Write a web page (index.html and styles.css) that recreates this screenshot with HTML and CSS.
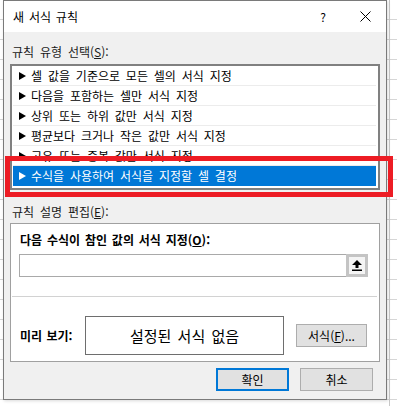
FILE: index.html
```html
<!DOCTYPE html>
<html lang="ko">
<head>
<meta charset="utf-8">
<link rel="stylesheet" href="styles.css">
</head>
<body>
<div class="dialog">
  <div class="titlebar">
    <span class="title">새 서식 규칙</span>
    <span class="help">?</span>
    <span class="close"><svg width="11" height="11" viewBox="0 0 11 11"><path d="M0.5 0.5 L10.5 10.5 M10.5 0.5 L0.5 10.5" stroke="#000" stroke-width="1" fill="none"/></svg></span>
  </div>
  <div class="body">
    <div class="label">규칙 유형 선택(<u>S</u>):</div>
    <ul class="rules">
      <li><svg class="tri" width="7" height="8" viewBox="0 0 7 8"><polygon points="0,0 7,4 0,8"/></svg>셀 값을 기준으로 모든 셀의 서식 지정</li>
      <li><svg class="tri" width="7" height="8" viewBox="0 0 7 8"><polygon points="0,0 7,4 0,8"/></svg>다음을 포함하는 셀만 서식 지정</li>
      <li><svg class="tri" width="7" height="8" viewBox="0 0 7 8"><polygon points="0,0 7,4 0,8"/></svg>상위 또는 하위 값만 서식 지정</li>
      <li><svg class="tri" width="7" height="8" viewBox="0 0 7 8"><polygon points="0,0 7,4 0,8"/></svg>평균보다 크거나 작은 값만 서식 지정</li>
      <li><svg class="tri" width="7" height="8" viewBox="0 0 7 8"><polygon points="0,0 7,4 0,8"/></svg>고유 또는 중복 값만 서식 지정</li>
      <li class="sel"><svg class="tri" width="7" height="8" viewBox="0 0 7 8"><polygon points="0,0 7,4 0,8"/></svg>수식을 사용하여 서식을 지정할 셀 결정</li>
    </ul>
    <div class="label label2">규칙 설명 편집(<u>E</u>):</div>
    <div class="group">
      <div class="gtitle">다음 수식이 참인 값의 서식 지정(<u>O</u>):</div>
      <div class="input">
        <span class="field"></span>
        <span class="pick"><svg width="10" height="11" viewBox="0 0 10 11"><polygon points="5,0 10,5 6.5,5 6.5,8 3.5,8 3.5,5 0,5" fill="#000"/><rect x="0" y="9.5" width="10" height="1.5" fill="#000"/></svg></span>
      </div>
      <div class="sep"></div>
      <div class="preview-row">
        <span class="plabel">미리 보기:</span>
        <div class="preview">설정된 서식 없음</div>
        <button class="btn fmt">서식(<u>F</u>)...</button>
      </div>
    </div>
    <div class="actions">
      <button class="btn ok">확인</button>
      <button class="btn">취소</button>
    </div>
  </div>
</div>
<div class="highlight"></div>
</body>
</html>
```

FILE: styles.css
```css
* { box-sizing: border-box; }
html, body { margin: 0; padding: 0; }
body {
  width: 397px;
  height: 406px;
  overflow: hidden;
  position: relative;
  font-family: "Noto Sans CJK KR", "Noto Sans", sans-serif;
  font-size: 12px;
  color: #000;
  background-color: #fff;
  background-image:
    linear-gradient(to right, transparent 389px, #c8c8c8 389px, #c8c8c8 390px, transparent 390px),
    repeating-linear-gradient(to bottom, transparent 0, transparent 19px, #d6d6d6 19px, #d6d6d6 20px);
}
.dialog {
  margin-left: 3px;
  width: 384px;
  height: 400px;
  border: 1px solid #7a7a7a;
  display: flex;
  flex-direction: column;
  background: #f0f0f0;
  box-shadow: 1px 1px 3px rgba(0,0,0,0.15);
}
.titlebar {
  height: 31px;
  flex: none;
  background: #fff;
  display: flex;
  align-items: center;
  padding-left: 9px;
  word-spacing: 1.5px;
}
.title { flex: 1; }
.help { width: 14px; text-align: center; margin-right: 30px; font-size: 12px; }
.close { width: 11px; height: 11px; margin-right: 15px; display: flex; }
.body {
  flex: 1;
  padding: 0 6px;
  display: flex;
  flex-direction: column;
}
.label {
  line-height: 16px;
  height: 16px;
  margin-top: 12px;
  padding-left: 2px;
  word-spacing: 2.5px;
  color: #1a1a1a;
}
.label2 { margin-top: 14px; }
u { text-decoration: underline; text-underline-offset: 1px; }
.rules {
  list-style: none;
  margin: 4px 0 0 0;
  padding: 0 1px 2px 1px;
  height: 126px;
  border: 2px solid #808080;
  background: #fff;
}
.rules li {
  height: 20px;
  border-bottom: 1px solid #ececec;
  display: flex;
  align-items: center;
  padding-left: 6px;
  margin-right: 1px;
  white-space: nowrap;
  word-spacing: 2.5px;
}
.tri { margin-right: 5px; fill: #000; flex: none; }
.rules li.sel { background: #0078d7; color: #fff; border-bottom-color: #0078d7; }
.rules li.sel .tri { fill: #fff; }
.group {
  margin-top: 3px;
  height: 139px;
  border: 1px solid #a0a0a0;
  background: #fff;
  display: flex;
  flex-direction: column;
}
.gtitle {
  font-weight: bold;
  line-height: 16px;
  margin-top: 8px;
  padding-left: 9px;
  word-spacing: 1.5px;
}
.input {
  margin: 6px 0 0 8px;
  width: 349px;
  height: 23px;
  display: flex;
  border: 1px solid #a9a9a9;
}
.field { flex: 1; }
.pick {
  width: 22px;
  margin: -1px -1px -1px 0;
  border: 3px solid #c4c4c4;
  background: #f4f4f4;
  display: flex;
  align-items: center;
  justify-content: center;
}
.sep {
  margin: 19px 2px 0 1px;
  height: 1px;
  background: #d2d2d2;
}
.preview-row {
  margin-top: 19px;
  display: flex;
  align-items: center;
  padding-left: 9px;
}
.plabel { font-weight: bold; width: 65px; word-spacing: 1px; }
.preview {
  width: 199px;
  height: 39px;
  border: 1px solid #6e6e6e;
  display: flex;
  align-items: center;
  justify-content: center;
  font-size: 15px;
  word-spacing: 2px;
}
.btn {
  font-family: inherit;
  font-size: 12px;
  color: #000;
  background: #e1e1e1;
  border: 1px solid #adadad;
  height: 23px;
  width: 73px;
  padding: 0;
  line-height: 1;
}
.fmt { width: 71px; margin-left: 12px; }
.actions {
  margin-top: 6px;
  display: flex;
  justify-content: flex-end;
  gap: 11px;
  padding-right: 7px;
}
.ok { border: 2px solid #0078d7; }
.highlight {
  position: absolute;
  left: 5px;
  top: 156px;
  width: 388px;
  height: 41px;
  border: 5px solid #ed1c24;
}
```
